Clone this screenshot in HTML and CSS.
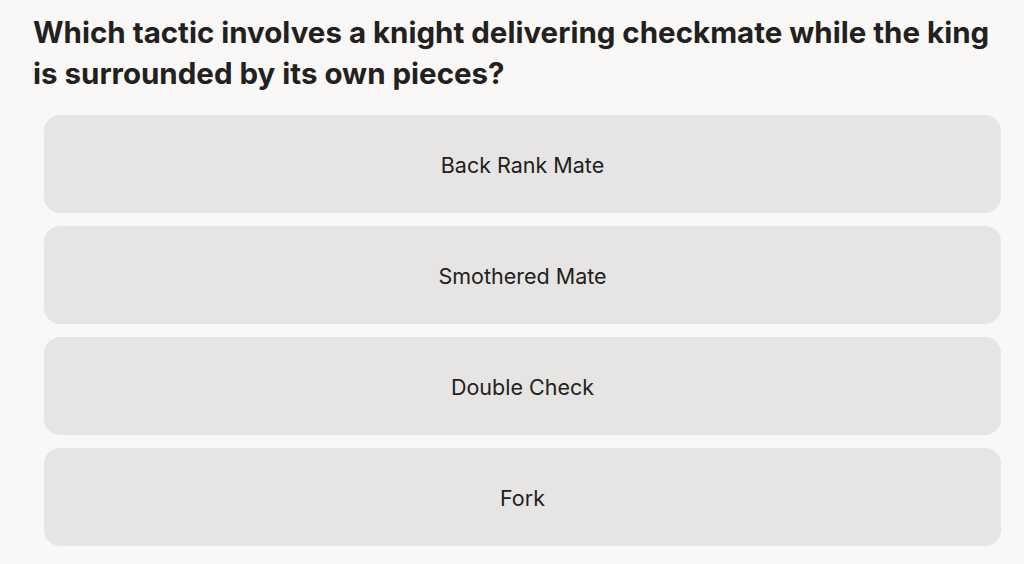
FILE: index.html
```html
<!DOCTYPE html>
<html lang="en">
<head>
<meta charset="utf-8">
<title>Quiz</title>
<link rel="stylesheet" href="styles.css">
</head>
<body>
<main class="quiz">
  <h1 class="question">Which tactic involves a knight delivering checkmate while the king is surrounded by its own pieces?</h1>
  <div class="options">
    <button class="option">Back Rank Mate</button>
    <button class="option">Smothered Mate</button>
    <button class="option">Double Check</button>
    <button class="option">Fork</button>
  </div>
</main>
</body>
</html>
```

FILE: styles.css
```css
html, body {
  margin: 0;
  padding: 0;
  background: #f9f8f6;
}
body {
  font-family: Inter, "Open Sans", sans-serif;
  color: #222120;
}
.quiz {
  padding: 12px 23px 0 33px;
}
.question {
  margin: 0;
  font-size: 29.5px;
  font-weight: 700;
  line-height: 41px;
  max-width: 962px;
}
.options {
  display: flex;
  flex-direction: column;
  gap: 13px;
  margin: 21px 0 0 11px;
}
.option {
  height: 98px;
  border: none;
  border-radius: 16px;
  background: #e6e5e3;
  font-family: inherit;
  font-size: 21.5px;
  color: #222120;
  padding: 2px 0 0;
}
```
